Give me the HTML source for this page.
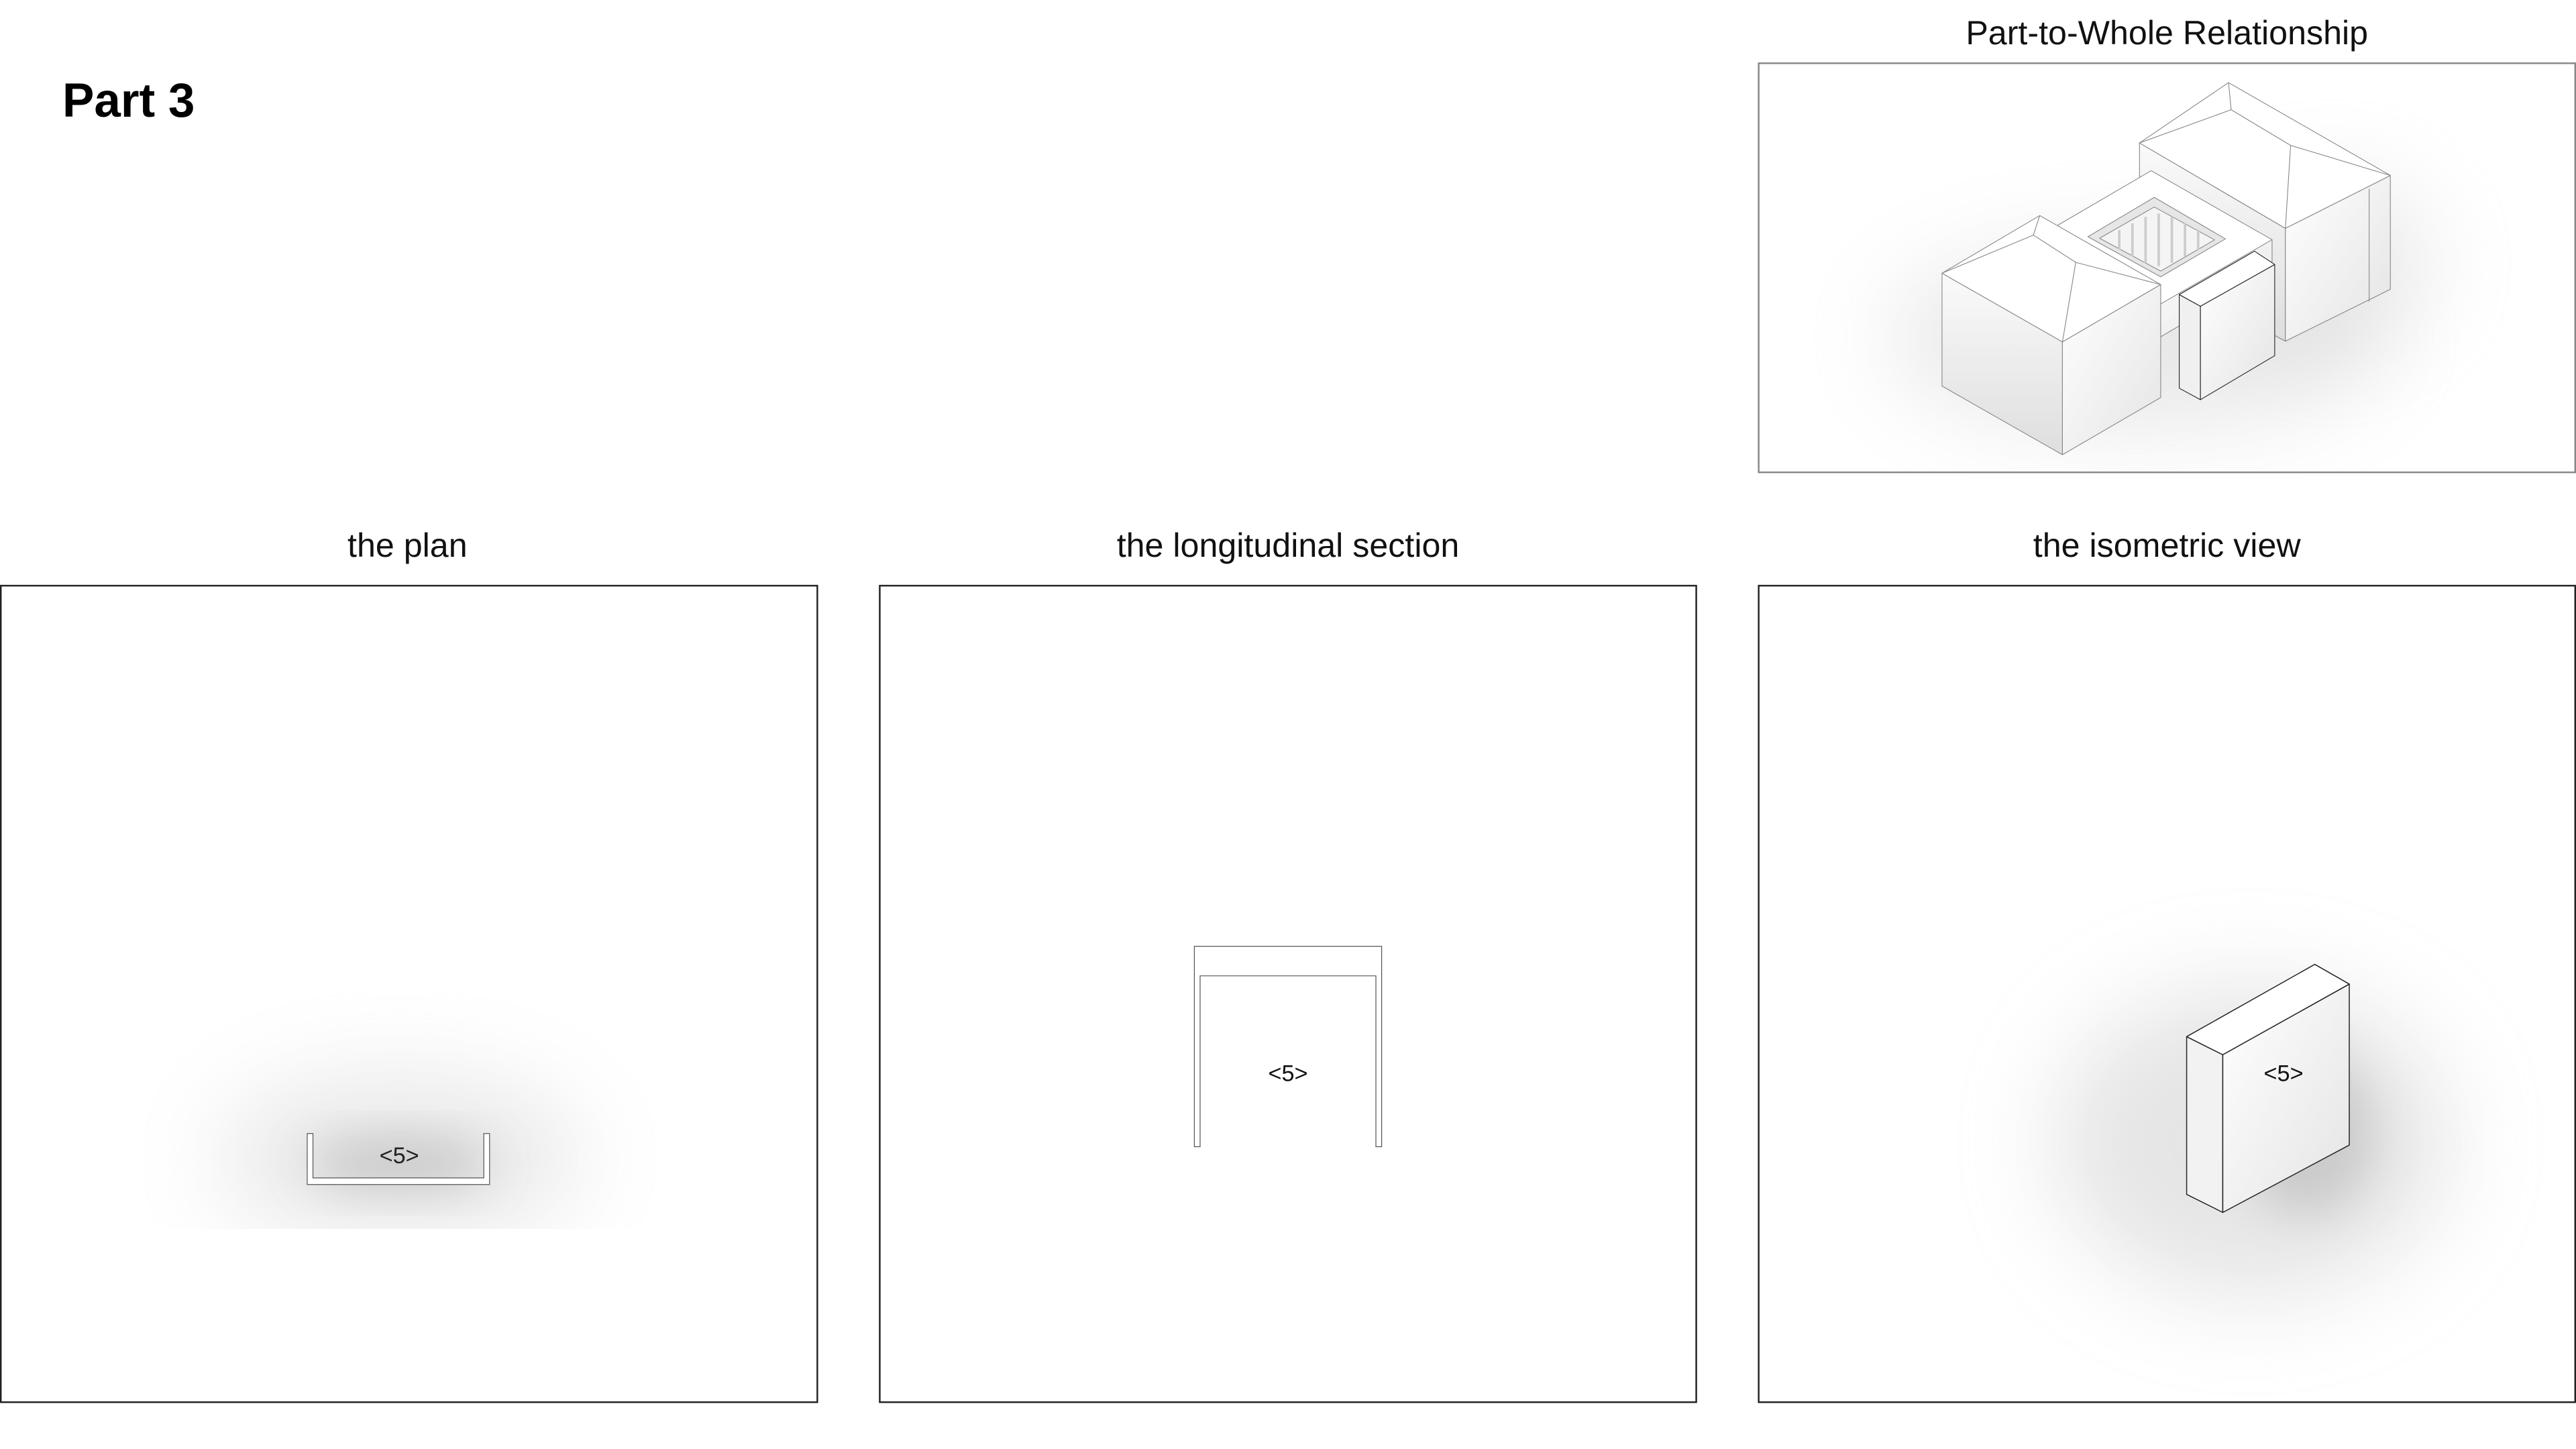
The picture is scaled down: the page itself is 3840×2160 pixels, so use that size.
<!DOCTYPE html>
<html><head><meta charset="utf-8"><style>
html,body{margin:0;padding:0;background:#fff;}
svg{display:block;}
text{font-family:"Liberation Sans",Arial,sans-serif;}
</style></head><body>
<svg width="3840" height="2160" viewBox="0 0 1568 882" xmlns="http://www.w3.org/2000/svg">
<defs>
<filter id="b8" x="-50%" y="-50%" width="200%" height="200%"><feGaussianBlur stdDeviation="28"/></filter>
<filter id="b4" x="-50%" y="-50%" width="200%" height="200%"><feGaussianBlur stdDeviation="14"/></filter>
<linearGradient id="fg" x1="0" y1="0" x2="1" y2="1"><stop offset="0" stop-color="#fff"/><stop offset="1" stop-color="#e4e4e4"/></linearGradient>
<linearGradient id="sg" x1="0" y1="0" x2="0" y2="1"><stop offset="0" stop-color="#fafafa"/><stop offset="1" stop-color="#dedede"/></linearGradient>
<clipPath id="planclip"><rect x="0" y="357" width="497" height="391"/></clipPath>
<clipPath id="isoclip"><rect x="1071" y="357" width="496" height="496"/></clipPath>
<clipPath id="topclip"><rect x="1071" y="39" width="496" height="248"/></clipPath>
</defs>
<rect width="1568" height="882" fill="#fff"/>

<text x="38" y="71" font-size="29" font-weight="bold" fill="#000">Part 3</text>
<text x="1319" y="27" font-size="20.5" text-anchor="middle" fill="#111">Part-to-Whole Relationship</text>
<text x="248" y="339" font-size="20.5" text-anchor="middle" fill="#111">the plan</text>
<text x="784" y="339" font-size="20.5" text-anchor="middle" fill="#111">the longitudinal section</text>
<text x="1319" y="339" font-size="20.5" text-anchor="middle" fill="#111">the isometric view</text>

<!-- top box -->
<g clip-path="url(#topclip)">
<ellipse cx="1300" cy="205" rx="150" ry="55" fill="#ccc" filter="url(#b8)" opacity="0.45"/>
<ellipse cx="1420" cy="160" rx="60" ry="50" fill="#ccc" filter="url(#b8)" opacity="0.4"/>
</g>
<rect x="1070.5" y="38.5" width="497" height="249" fill="none" stroke="#888" stroke-width="1"/>
<g stroke="#888" stroke-width="0.45" stroke-linejoin="round">
<polygon points="1302.3,87 1391.1,139 1391.1,207.7 1302.3,160" fill="url(#sg)"/>
<polygon points="1391.1,139 1455,106.8 1455,176.1 1391.1,207.7" fill="url(#fg)"/>
<polygon points="1302.3,87 1356.5,50.3 1455,106.8 1391.1,139" fill="#fff"/>
<polyline points="1302.3,87 1358.1,66.8 1356.5,50.3" fill="none"/>
<polyline points="1358.1,66.8 1394.3,88.5 1391.1,139" fill="none"/>
<polyline points="1394.3,88.5 1455,106.8" fill="none"/>
<polyline points="1442.1,114.9 1442.1,183.6" fill="none"/>
<polygon points="1252.9,136.9 1309.4,103.9 1383,145.9 1383,165 1315.2,205 1252.9,170" fill="#fff"/>
<polygon points="1383,145.9 1383,165 1315.2,205 1315.2,185" fill="url(#fg)"/>
<polygon points="1270.9,144.1 1311.3,120.1 1354.6,145.4 1315.2,168.5" fill="#e6e6e6"/>
<polygon points="1278,145 1311.3,126 1348,146 1315.2,165" fill="#f4f4f4"/>
<polygon points="1182.1,166.3 1255.4,208.1 1255.4,276.8 1182.1,235" fill="url(#sg)"/>
<polygon points="1255.4,208.1 1315.2,173.2 1315.2,242 1255.4,276.8" fill="url(#fg)"/>
<polygon points="1182.1,166.3 1241.6,131.2 1315.2,173.2 1255.4,208.1" fill="#fff"/>
<polyline points="1182.1,166.3 1237.7,143.1 1241.6,131.2" fill="none"/>
<polyline points="1237.7,143.1 1263.5,159.7 1255.4,208.1" fill="none"/>
<polyline points="1263.5,159.7 1315.2,173.2" fill="none"/>
<polygon points="1326.5,179.3 1339.4,186.4 1339.4,243.3 1326.5,236.3" fill="#f0f0f0" stroke="#222"/>
<polygon points="1339.4,186.4 1384.6,161 1384.6,216.5 1339.4,243.3" fill="url(#fg)" stroke="#222"/>
<polygon points="1326.5,179.3 1372.3,152.9 1384.6,161 1339.4,186.4" fill="#fff" stroke="#222"/>
</g>
<g stroke="#ccc" stroke-width="1.5">
<line x1="1290" y1="140" x2="1290" y2="152"/><line x1="1298" y1="136" x2="1298" y2="156"/><line x1="1306" y1="132" x2="1306" y2="160"/><line x1="1314" y1="130" x2="1314" y2="162"/><line x1="1322" y1="132" x2="1322" y2="160"/><line x1="1330" y1="136" x2="1330" y2="156"/><line x1="1338" y1="140" x2="1338" y2="152"/>
</g>

<!-- plan -->
<g clip-path="url(#planclip)">
<ellipse cx="243" cy="705" rx="110" ry="50" fill="#ccc" filter="url(#b8)" opacity="0.45"/>
<ellipse cx="243" cy="708" rx="55" ry="16" fill="#bbb" filter="url(#b4)" opacity="0.7"/>
</g>
<rect x="0.5" y="356.5" width="497" height="497" fill="none" stroke="#222" stroke-width="1"/>
<polygon points="187,690 190.5,690 190.5,717 294.5,717 294.5,690 298,690 298,721 187,721" fill="#fff" stroke="#555" stroke-width="0.5"/>
<text x="243" y="708" font-size="14" text-anchor="middle" fill="#222">&lt;5&gt;</text>

<!-- section -->
<rect x="535.5" y="356.5" width="497" height="497" fill="none" stroke="#222" stroke-width="1"/>
<polygon points="727,576 841,576 841,698 837.5,698 837.5,594 730.5,594 730.5,698 727,698" fill="#fff" stroke="#555" stroke-width="0.5"/>
<text x="784" y="658" font-size="14" text-anchor="middle" fill="#111">&lt;5&gt;</text>

<!-- iso -->
<g clip-path="url(#isoclip)">
<ellipse cx="1370" cy="695" rx="120" ry="95" fill="#ccc" filter="url(#b8)" opacity="0.5"/>
<ellipse cx="1405" cy="690" rx="40" ry="50" fill="#aaa" filter="url(#b4)" opacity="0.45"/>
</g>
<rect x="1070.5" y="356.5" width="497" height="497" fill="none" stroke="#222" stroke-width="1"/>
<g stroke="#222" stroke-width="0.6" stroke-linejoin="round">
<polygon points="1331,631 1353,642 1353,738 1331,727" fill="#f2f2f2"/>
<polygon points="1353,642 1430,599 1430,697 1353,738" fill="url(#fg)"/>
<polygon points="1331,631 1409,587 1430,599 1353,642" fill="#fff"/>
</g>
<text x="1390" y="658" font-size="14" text-anchor="middle" fill="#111">&lt;5&gt;</text>
</svg>
</body></html>
